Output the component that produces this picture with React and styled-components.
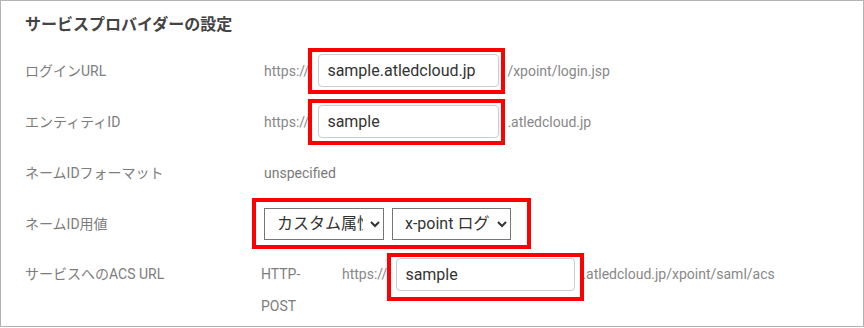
import React from "react";
import styled, { createGlobalStyle } from "styled-components";

const Global = createGlobalStyle`
  html, body { margin: 0; padding: 0; background: #fff; }
  body { font-family: Roboto, "Noto Sans CJK JP", sans-serif; }
  * { box-sizing: border-box; }
`;

const Panel = styled.section`
  width: 864px;
  height: 327px;
  border: 1px solid #b3b3b3;
  padding: 12px 24px 0 24px;
  overflow: hidden;
  background: #fff;
`;

const Title = styled.h2`
  margin: 0 0 8px 0;
  font-size: 16px;
  line-height: 24px;
  font-weight: 700;
  color: #444;
`;

const Row = styled.div`
  display: grid;
  grid-template-columns: 239px 1fr;
  align-items: ${(p) => (p.$top ? "start" : "center")};
  height: ${(p) => (p.$top ? "auto" : "51px")};
  padding-top: ${(p) => (p.$top ? "9px" : "0")};
`;

const Label = styled.div`
  font-size: 14px;
  line-height: 32px;
  color: #7d7d7d;
  white-space: nowrap;
`;

const Value = styled.div`
  display: flex;
  align-items: ${(p) => (p.$top ? "flex-start" : "center")};
  font-size: 14px;
  line-height: 32px;
  color: #888;
`;

const Plain = styled.span`
  color: #7a7a7a;
`;

const Protocol = styled.span`
  width: 46px;
  margin: 0 35px 0 -3px;
  color: #7d7d7d;
`;

const Marked = styled.span`
  position: relative;
  display: inline-flex;
  gap: 8px;
  margin: ${(p) => p.$margin || "0"};
  &::after {
    content: "";
    position: absolute;
    left: ${(p) => p.$l}px;
    right: ${(p) => p.$r}px;
    top: ${(p) => p.$t}px;
    bottom: ${(p) => p.$b}px;
    border: 4px solid #ff0000;
    pointer-events: none;
  }
`;

const TextInput = styled.input`
  width: ${(p) => p.$w || 181}px;
  height: 33px;
  border: 1px solid #cccccc;
  border-radius: 4px;
  padding: 0 8px;
  font-family: Roboto, "Noto Sans CJK JP", sans-serif;
  font-size: 16px;
  color: #333;
  background: #fff;
  outline: none;
`;

const Select = styled.select`
  width: ${(p) => p.$w}px;
  height: 32px;
  border: 1px solid #767676;
  border-radius: 0;
  padding: 0 4px 0 8px;
  font-family: Roboto, "Noto Sans CJK JP", sans-serif;
  font-size: 16px;
  color: #333;
  background: #fff;
`;

export default function App() {
  return (
    <>
      <Global />
      <Panel>
        <Title>サービスプロバイダーの設定</Title>
        <Row>
          <Label>ログインURL</Label>
          <Value>
            https://
            <Marked $margin="0 8px 0 9px" $l={-10} $r={-6} $t={-6} $b={-7}>
              <TextInput defaultValue="sample.atledcloud.jp" />
            </Marked>
            /xpoint/login.jsp
          </Value>
        </Row>
        <Row>
          <Label>エンティティID</Label>
          <Value>
            https://
            <Marked $margin="0 8px 0 9px" $l={-10} $r={-6} $t={-6} $b={-7}>
              <TextInput defaultValue="sample" />
            </Marked>
            .atledcloud.jp
          </Value>
        </Row>
        <Row>
          <Label>ネームIDフォーマット</Label>
          <Value>
            <Plain>unspecified</Plain>
          </Value>
        </Row>
        <Row>
          <Label>ネームID用値</Label>
          <Value>
            <Marked $l={-12} $r={-20} $t={-10} $b={-9}>
              <Select $w={120} defaultValue="custom">
                <option value="custom">カスタム属性</option>
                <option value="login">x-point ログインID</option>
              </Select>
              <Select $w={119} defaultValue="login">
                <option value="login">x-point ログインID</option>
                <option value="mail">メールアドレス</option>
              </Select>
            </Marked>
          </Value>
        </Row>
        <Row $top>
          <Label>サービスへのACS URL</Label>
          <Value $top>
            <Protocol>HTTP-POST</Protocol>
            https://
            <Marked $margin="0 7px 0 9px" $l={-9} $r={-9} $t={-5} $b={-10}>
              <TextInput $w={179} defaultValue="sample" />
            </Marked>
            .atledcloud.jp/xpoint/saml/acs
          </Value>
        </Row>
      </Panel>
    </>
  );
}
